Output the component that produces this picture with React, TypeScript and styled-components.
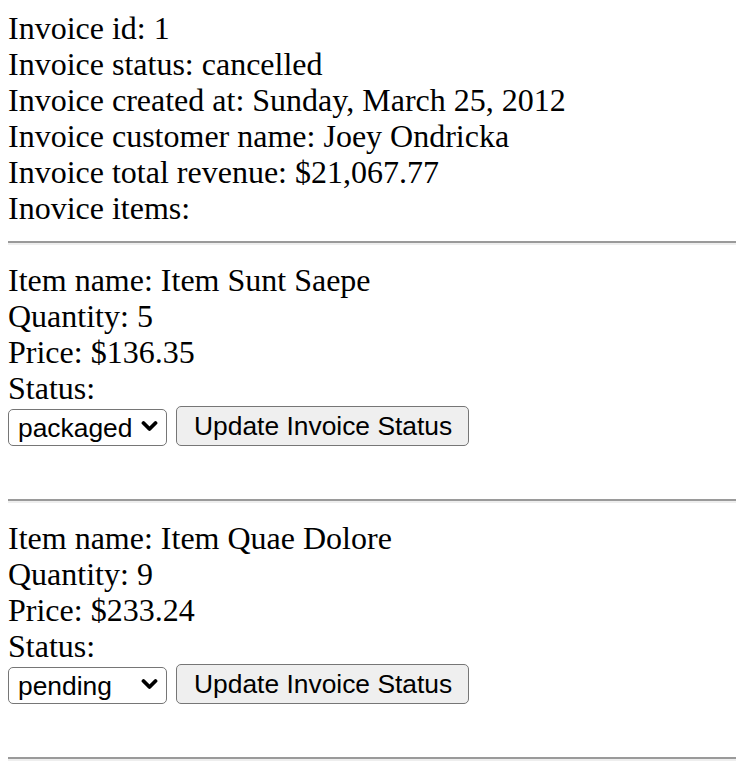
import React from "react";
import styled, { createGlobalStyle } from "styled-components";

const Global = createGlobalStyle`
  html, body { background: #fff; }
  body {
    margin: 9px 0 0 8px;
    font-family: "Liberation Serif", "Times New Roman", serif;
    font-size: 32px;
    line-height: 36px;
    color: #000;
  }
`;

const Page = styled.div`
  display: flex;
  flex-direction: column;
`;

const Line = styled.div`
  box-sizing: border-box;
  height: 36px;
  padding-top: 1px;
  white-space: nowrap;
`;

const Rule = styled.hr`
  margin: 16px 0;
  height: 0;
  border: none;
  border-top: 2px solid #9a9a9a;
  border-bottom: 2px solid #eeeeee;
`;

const Item = styled.section`
  display: flex;
  flex-direction: column;
`;

const Controls = styled.div`
  display: flex;
  align-items: center;
  gap: 9px;
  height: 42px;
  margin-bottom: 36px;
`;

const SelectWrap = styled.div`
  position: relative;
  width: 159px;
  height: 37px;
`;

const Select = styled.select`
  appearance: none;
  -webkit-appearance: none;
  width: 100%;
  height: 100%;
  box-sizing: border-box;
  border: 1.5px solid #767676;
  border-radius: 5px;
  background: #fff;
  color: #000;
  font-family: "Liberation Sans", Arial, sans-serif;
  font-size: 26.4px;
  padding: 0 0 0 9px;
  outline: none;
`;

const Chevron = styled.svg`
  position: absolute;
  right: 9px;
  top: 50%;
  transform: translateY(-50%);
  width: 17px;
  height: 12px;
  pointer-events: none;
`;

const Button = styled.button`
  height: 40px;
  box-sizing: border-box;
  padding: 0 16px 0 17px;
  border: 1.5px solid #767676;
  border-radius: 5px;
  background: #efefef;
  color: #000;
  font-family: "Liberation Sans", Arial, sans-serif;
  font-size: 26.4px;
  white-space: nowrap;
`;

type InvoiceItem = { name: string; quantity: number; price: string; status: string };

const items: InvoiceItem[] = [
  { name: "Item Sunt Saepe", quantity: 5, price: "$136.35", status: "packaged" },
  { name: "Item Quae Dolore", quantity: 9, price: "$233.24", status: "pending" },
];

const ItemBlock: React.FC<{ item: InvoiceItem }> = ({ item }) => (
  <Item>
    <Line>Item name: {item.name}</Line>
    <Line>Quantity: {item.quantity}</Line>
    <Line>Price: {item.price}</Line>
    <Line>Status:</Line>
    <Controls>
      <SelectWrap>
        <Select defaultValue={item.status}>
          <option value="pending">pending</option>
          <option value="packaged">packaged</option>
          <option value="shipped">shipped</option>
        </Select>
        <Chevron viewBox="0 0 17 12">
          <path d="M2.5 3 L8.5 9 L14.5 3" fill="none" stroke="#000" strokeWidth="3.8" strokeLinecap="round" strokeLinejoin="round" />
        </Chevron>
      </SelectWrap>
      <Button>Update Invoice Status</Button>
    </Controls>
  </Item>
);

export default function App() {
  return (
    <>
      <Global />
      <Page>
        <Line>Invoice id: 1</Line>
        <Line>Invoice status: cancelled</Line>
        <Line>Invoice created at: Sunday, March 25, 2012</Line>
        <Line>Invoice customer name: Joey Ondricka</Line>
        <Line>Invoice total revenue: $21,067.77</Line>
        <Line>Inovice items:</Line>
        {items.map((it) => (
          <React.Fragment key={it.name}>
            <Rule />
            <ItemBlock item={it} />
          </React.Fragment>
        ))}
        <Rule />
      </Page>
    </>
  );
}
